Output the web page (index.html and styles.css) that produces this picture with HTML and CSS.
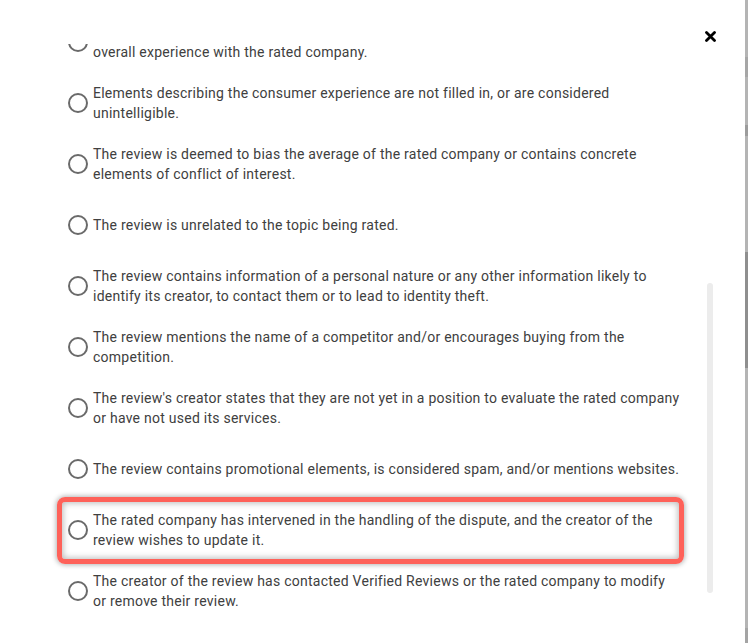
FILE: index.html
```html
<!DOCTYPE html>
<html lang="en">
<head>
<meta charset="utf-8">
<title>Report a review</title>
<link rel="stylesheet" href="styles.css">
</head>
<body>
<div class="page">
  <div class="modal">
    <div class="modal-header">
      <button class="close" aria-label="Close">
        <svg width="11" height="11" viewBox="0 0 11 11"><path d="M1.5 1.5 L9.5 9.5 M9.5 1.5 L1.5 9.5" stroke="#000" stroke-width="2.8" stroke-linecap="round"/></svg>
      </button>
    </div>
    <div class="scroll-area">
      <ul class="options">
        <li class="option"><span class="radio"></span><span class="label">The review does not contain any element making it possible to assess the<br>overall experience with the rated company.</span></li>
        <li class="option"><span class="radio"></span><span class="label">Elements describing the consumer experience are not filled in, or are considered unintelligible.</span></li>
        <li class="option"><span class="radio"></span><span class="label">The review is deemed to bias the average of the rated company or contains concrete elements of conflict of interest.</span></li>
        <li class="option"><span class="radio"></span><span class="label">The review is unrelated to the topic being rated.</span></li>
        <li class="option"><span class="radio"></span><span class="label">The review contains information of a personal nature or any other information likely to identify its creator, to contact them or to lead to identity theft.</span></li>
        <li class="option"><span class="radio"></span><span class="label">The review mentions the name of a competitor and/or encourages buying from the competition.</span></li>
        <li class="option"><span class="radio"></span><span class="label">The review's creator states that they are not yet in a position to evaluate the rated company or have not used its services.</span></li>
        <li class="option"><span class="radio"></span><span class="label">The review contains promotional elements, is considered spam, and/or mentions websites.</span></li>
        <li class="option highlighted"><span class="radio"></span><span class="label">The rated company has intervened in the handling of the dispute, and the creator of the review wishes to update it.</span></li>
        <li class="option"><span class="radio"></span><span class="label">The creator of the review has contacted Verified Reviews or the rated company to modify or remove their review.</span></li>
      </ul>
      <div class="scrollbar"><div class="thumb"></div></div>
    </div>
  </div>
  <div class="page-scrollbar"></div>
</div>
</body>
</html>
```
FILE: styles.css
```css
* { box-sizing: border-box; }
html, body {
  margin: 0;
  padding: 0;
  background: #fff;
}
body {
  font-family: Roboto, "Liberation Sans", sans-serif;
  font-size: 14px;
  letter-spacing: 0.25px;
  color: #404040;
}
.page {
  display: flex;
  width: 748px;
  height: 643px;
  overflow: hidden;
}
.modal {
  flex: 1;
  display: flex;
  flex-direction: column;
  background: #fff;
}
.modal-header {
  height: 44px;
  flex: none;
  display: flex;
  justify-content: flex-end;
  align-items: flex-start;
  padding: 31px 29px 0 0;
}
.close {
  border: 0;
  background: none;
  padding: 0;
  width: 11px;
  height: 11px;
  display: block;
  cursor: pointer;
}
.close svg { display: block; }
.scroll-area {
  flex: 1;
  display: flex;
  overflow: hidden;
  padding-left: 68px;
}
.options {
  list-style: none;
  margin: -22px 0 0 0;
  padding: 0;
  width: 612px;
  flex: none;
  display: flex;
  flex-direction: column;
  gap: 21px;
}
.option {
  position: relative;
  display: flex;
  align-items: center;
  gap: 5px;
  min-height: 40px;
  line-height: 20px;
}
.radio {
  flex: none;
  width: 20px;
  height: 20px;
  border: 2px solid #6a6a6a;
  border-radius: 50%;
}
.label {
  flex: 1;
}
.highlighted::after {
  content: "";
  position: absolute;
  left: -11px;
  top: -13px;
  bottom: -14px;
  width: 617px;
  border: 5px solid #fe6159;
  border-radius: 8px;
  box-shadow: 0 0 5px 1px rgba(0,0,0,0.3), inset 0 0 6px 1px rgba(0,0,0,0.28);
  pointer-events: none;
}
.scrollbar {
  margin-left: 27px;
  width: 6px;
  flex: none;
}
.thumb {
  margin-top: 239px;
  height: 310px;
  background: #ececec;
  border-radius: 3px;
}
.page-scrollbar {
  width: 3px;
  flex: none;
  background: linear-gradient(to bottom,
    #b4b4b4 0, #b4b4b4 57px,
    #a6a6a6 57px, #a6a6a6 77px,
    #b4b4b4 77px, #b4b4b4 125px,
    #9c9c9c 125px, #9c9c9c 136px,
    #b4b4b4 136px, #b4b4b4 252px,
    #8f8f8f 252px, #8f8f8f 368px,
    #b4b4b4 368px, #b4b4b4 628px,
    #a4a4a4 628px, #a4a4a4 643px);
}
```
